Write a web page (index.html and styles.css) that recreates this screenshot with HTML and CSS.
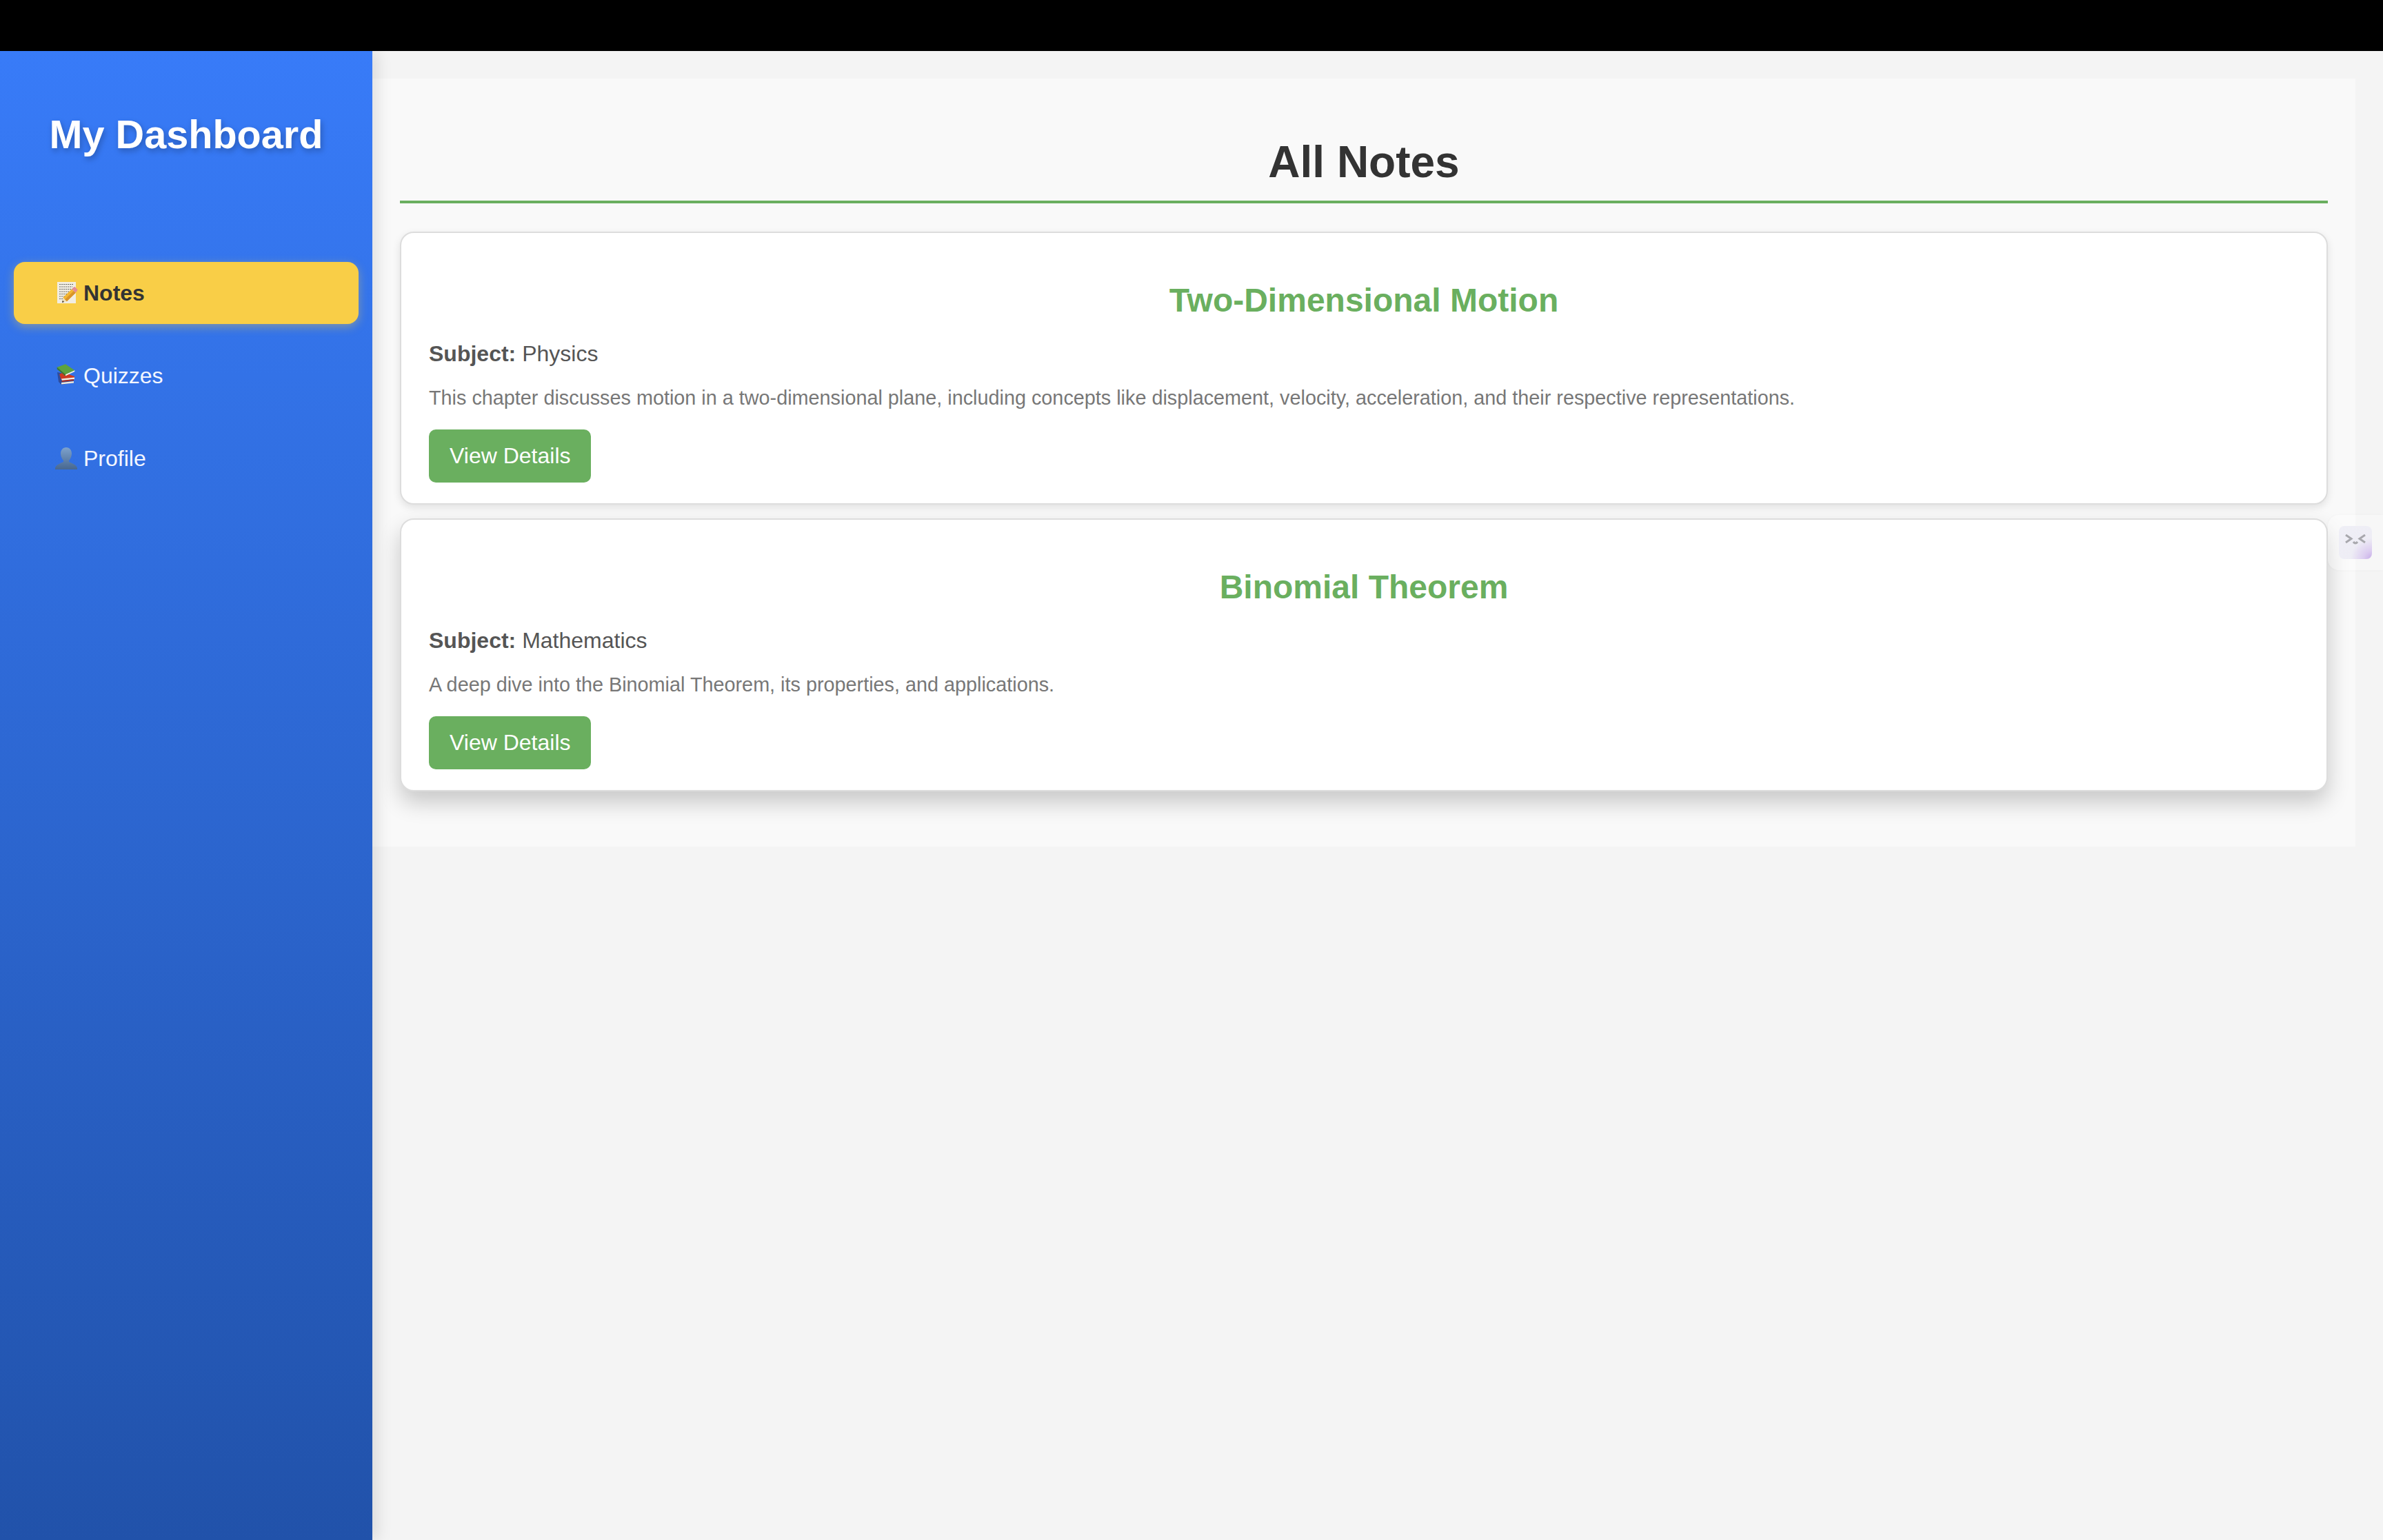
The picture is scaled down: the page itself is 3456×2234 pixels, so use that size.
FILE: index.html
```html
<!DOCTYPE html>
<html lang="en">
<head>
<meta charset="utf-8">
<title>My Dashboard</title>
<link rel="stylesheet" href="styles.css">
</head>
<body>
<div class="topbar"></div>
<div class="layout">
  <aside class="sidebar">
    <h2 class="brand">My Dashboard</h2>
    <ul class="nav">
      <li class="nav-item active">
        <svg class="nav-icon" viewBox="0 0 32 32"><rect x="3" y="0" width="27" height="31" fill="#f1ede2"/><g stroke="#66655f" stroke-width="1" stroke-dasharray="2 1"><path d="M6 3.5h21M6 7h19M6 10.500h20M6 14h15M6 17.500h12M6 21h8M6 24.500h5"/></g><path d="M11.200 22.700L24.200 10.200L29.800 15.800L16.800 28.300z" fill="#f2b632"/><path d="M14 25.500L27 13L29.800 15.800L16.800 28.300z" fill="#d9942a"/><path d="M24.200 10.200L27 7.400Q28 6.500 29 7.400L32 10.400Q33 11.500 32 12.600L29.800 15.800z" fill="#e58b94"/><path d="M11.200 22.700L16.800 28.300L10 30z" fill="#f0dfb8"/><path d="M10 30L10.800 26.800L13 29z" fill="#3f3428"/></svg>
        Notes
      </li>
      <li class="nav-item">
        <svg class="nav-icon" viewBox="0 0 32 32"><path d="M3 11l6 1 3 12 15-1v3L9 29 5 25z" fill="#2e4c9c"/><path d="M9 26l18-2v2.500L9 28.500z" fill="#efeadd"/><path d="M6 14l6-3 16 6v3L9 22z" fill="#cc3a22"/><path d="M9 20.500l19-2v2.500L10 23z" fill="#f3ece0"/><path d="M9 23l18-2v2L10 25z" fill="#b03020"/><path d="M2.700 3.700L15 -0.700L28.300 8.300L15 14.300z" fill="#5da33e"/><path d="M2.700 3.700L15 14.300V16.500L2.700 6.500z" fill="#3c7a2c"/><path d="M15 14.300L28.300 8.300V10L15 16.300z" fill="#f4f4ec"/></svg>
        Quizzes
      </li>
      <li class="nav-item">
        <svg class="nav-icon" viewBox="0 0 32 32"><defs><linearGradient id="bust" x1="0" y1="0" x2="0" y2="1"><stop offset="0" stop-color="#7da2cd"/><stop offset="1" stop-color="#476790"/></linearGradient></defs><path d="M16 0c5 0 8 4 8 9 0 4-2 8-4 10v2c4 2 11 4 12 9v2H0v-2c1-5 8-7 12-9v-2c-2-2-4-6-4-10 0-5 3-9 8-9z" fill="url(#bust)"/></svg>
        Profile
      </li>
    </ul>
  </aside>
  <main class="main">
    <section class="panel">
      <h1 class="page-title">All Notes</h1>
      <article class="card">
        <h3 class="card-title">Two-Dimensional Motion</h3>
        <p class="subject"><strong>Subject:</strong> Physics</p>
        <p class="desc">This chapter discusses motion in a two-dimensional plane, including concepts like displacement, velocity, acceleration, and their respective representations.</p>
        <button class="btn">View Details</button>
      </article>
      <article class="card card-hover">
        <h3 class="card-title">Binomial Theorem</h3>
        <p class="subject"><strong>Subject:</strong> Mathematics</p>
        <p class="desc">A deep dive into the Binomial Theorem, its properties, and applications.</p>
        <button class="btn">View Details</button>
      </article>
    </section>
  </main>
</div>
<div class="ext-tab">
  <div class="ext-face">
    <svg class="ext-glyph" viewBox="0 0 30 16"><path d="M1 1l8 5.500L1 12M29 1l-8 5.500L29 12" fill="none" stroke="#a8a8ad" stroke-width="3"/><path d="M12 11q3 4 6 0" fill="none" stroke="#a8a8ad" stroke-width="3"/></svg>
  </div>
</div>
</body>
</html>
```
FILE: styles.css
```css
* { box-sizing: border-box; }
html, body { margin: 0; padding: 0; }
body {
  width: 3456px;
  height: 2234px;
  overflow: hidden;
  position: relative;
  background: #f4f4f4;
  font-family: "Liberation Sans", Arial, sans-serif;
  color: #333;
  display: flex;
  flex-direction: column;
}
.topbar { height: 74px; background: #000; flex: none; }
.layout { display: flex; flex: 1; min-height: 0; }
.sidebar {
  width: 540px;
  flex: none;
  padding: 88px 20px 0;
  background: linear-gradient(180deg, #387bf8 0%, #2152aa 100%);
  box-shadow: 8px 0 20px rgba(0, 0, 0, 0.1);
  position: relative;
  z-index: 1;
}
.brand {
  margin: 0 0 152px;
  font-size: 57.6px;
  line-height: 66px;
  font-weight: 700;
  color: #fff;
  text-align: center;
  text-shadow: 2px 4px 8px rgba(0, 0, 0, 0.25);
}
.nav { list-style: none; margin: 0; padding: 0; display: flex; flex-direction: column; gap: 30px; }
.nav-item {
  height: 90px;
  padding-left: 60px;
  display: flex;
  align-items: center;
  gap: 9px;
  font-size: 32px;
  color: #f4f7ff;
  border-radius: 16px;
}
.nav-item.active {
  background: #f9ce47;
  color: #333;
  font-weight: 700;
  box-shadow: 0 4px 14px rgba(249, 206, 71, 0.4);
}
.nav-icon { width: 32px; height: 32px; flex: none; overflow: visible; }
.main { flex: 1; min-width: 0; padding: 40px 40px 0 0; }
.panel { background: #f9f9f9; padding: 84px 40px 40px; height: 1114px; }
.page-title {
  margin: 0 0 41px;
  padding-bottom: 19px;
  font-size: 64px;
  line-height: 74px;
  font-weight: 700;
  color: #333;
  text-align: center;
  border-bottom: 4px solid #6aaf5f;
}
.card {
  height: 396px;
  margin-bottom: 20px;
  padding: 30px 40px;
  background: #fff;
  border: 2px solid #ddd;
  border-radius: 20px;
  box-shadow: 0 4px 12px rgba(0, 0, 0, 0.1);
}
.card-hover { box-shadow: 0 16px 32px rgba(0, 0, 0, 0.2); }
.card-title {
  margin: 40px 0 31px;
  font-size: 48px;
  line-height: 55px;
  font-weight: 700;
  color: #6aaf5f;
  text-align: center;
}
.subject { margin: 0 0 29px; font-size: 32px; line-height: 38px; color: #555; }
.desc { margin: 0 0 29px; font-size: 28.8px; line-height: 33px; color: #777; }
.btn {
  display: block;
  height: 77px;
  padding: 0 30px;
  border: 0;
  border-radius: 10px;
  background: #6aaf5f;
  color: #fff;
  font: 32px/37px "Liberation Sans", Arial, sans-serif;
}
.ext-tab {
  position: absolute;
  top: 747px;
  right: 0;
  width: 80px;
  height: 80px;
  padding: 16px;
  background: rgba(255, 255, 255, 0.3);
  border-radius: 16px 0 0 16px;
  box-shadow: 0 0 4px rgba(0, 0, 0, 0.03);
}
.ext-face {
  width: 48px;
  height: 48px;
  border-radius: 8px;
  background: radial-gradient(circle at 100% 100%, #c6ade8 0%, #dccdf0 18%, #eeedf5 45%, #efeff6 100%);
  display: flex;
  justify-content: center;
  padding-top: 12px;
}
.ext-glyph { width: 30px; height: 16px; }
```
